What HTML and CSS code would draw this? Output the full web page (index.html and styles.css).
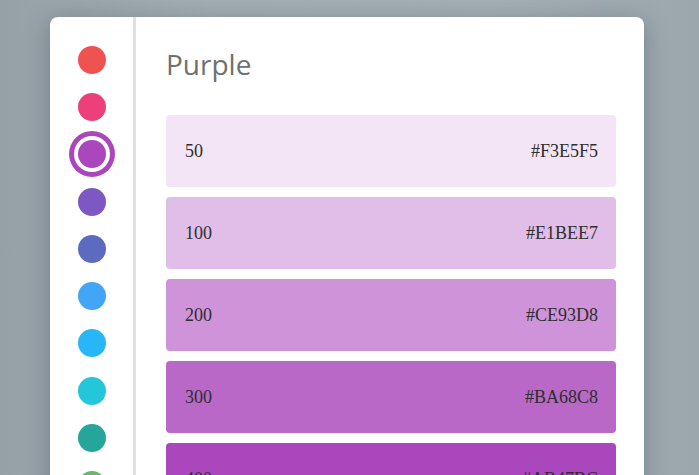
FILE: index.html
```html
<!DOCTYPE html>
<html>
<head>
	<title>Colors</title>
	<meta charset="utf-8">
	<link rel="stylesheet" href="styles.css">
</head>
<body>
<div class="card">
	<ul class="side">
		<li><span class="dot red"></span></li>
		<li><span class="dot pink"></span></li>
		<li><span class="dot purple active"></span></li>
		<li><span class="dot deeppurple"></span></li>
		<li><span class="dot indigo"></span></li>
		<li><span class="dot blue"></span></li>
		<li><span class="dot lightblue"></span></li>
		<li><span class="dot cyan"></span></li>
		<li><span class="dot teal"></span></li>
		<li><span class="dot green"></span></li>
	</ul>
	<div class="main">
		<h1>Purple</h1>
		<div class="shade s50"><span>50</span><span>#F3E5F5</span></div>
		<div class="shade s100"><span>100</span><span>#E1BEE7</span></div>
		<div class="shade s200"><span>200</span><span>#CE93D8</span></div>
		<div class="shade s300"><span>300</span><span>#BA68C8</span></div>
		<div class="shade s400"><span>400</span><span>#AB47BC</span></div>
	</div>
</div>
</body>
</html>
```

FILE: styles.css
```css
*{
	padding: 0;
	margin: 0;
	box-sizing: border-box;
}
html, body{
	height: 100%;
	overflow: hidden;
}
body{
	background: linear-gradient(90deg, #95a1a7 0%, #a3aeb4 30%, #a5b0b6 70%, #9ba7ad 100%);
	font-family: "Liberation Serif", serif;
}
.card{
	margin: 17px 0 0 50px;
	width: 594px;
	height: 600px;
	background: #fff;
	border-radius: 8px;
	display: flex;
	box-shadow: 0 4px 24px rgba(40, 55, 65, 0.35);
}
.side{
	list-style: none;
	width: 86px;
	flex: none;
	border-right: 3px solid #e0e0e0;
	padding-top: 19px;
}
.side li{
	height: 47.3px;
	display: flex;
	align-items: center;
	justify-content: center;
}
.dot{
	width: 28px;
	height: 28px;
	border-radius: 50%;
	display: block;
}
.dot.active{
	box-shadow: 0 0 0 4px #fff, 0 0 0 9px #ab47bc;
}
.red{ background: #ef5350; }
.pink{ background: #ec407a; }
.purple{ background: #ab47bc; }
.deeppurple{ background: #7e57c2; }
.indigo{ background: #5c6bc0; }
.blue{ background: #42a5f5; }
.lightblue{ background: #29b6f6; }
.cyan{ background: #26c6da; }
.teal{ background: #26a69a; }
.green{ background: #66bb6a; }

.main{
	flex: 1;
	padding: 27px 28px 0 30px;
}
.main h1{
	font-family: "Open Sans", Lato, sans-serif;
	font-weight: normal;
	font-size: 28px;
	color: #707070;
	line-height: 40px;
	margin-bottom: 31px;
}
.shade{
	height: 72px;
	border-radius: 4px;
	margin-bottom: 10px;
	display: flex;
	align-items: center;
	justify-content: space-between;
	padding: 0 18px 0 19px;
	font-size: 18px;
	color: #2e2e2e;
}
.s50{ background: #f3e5f5; }
.s100{ background: #e1bee7; }
.s200{ background: #ce93d8; }
.s300{ background: #ba68c8; }
.s400{ background: #ab47bc; }
```
